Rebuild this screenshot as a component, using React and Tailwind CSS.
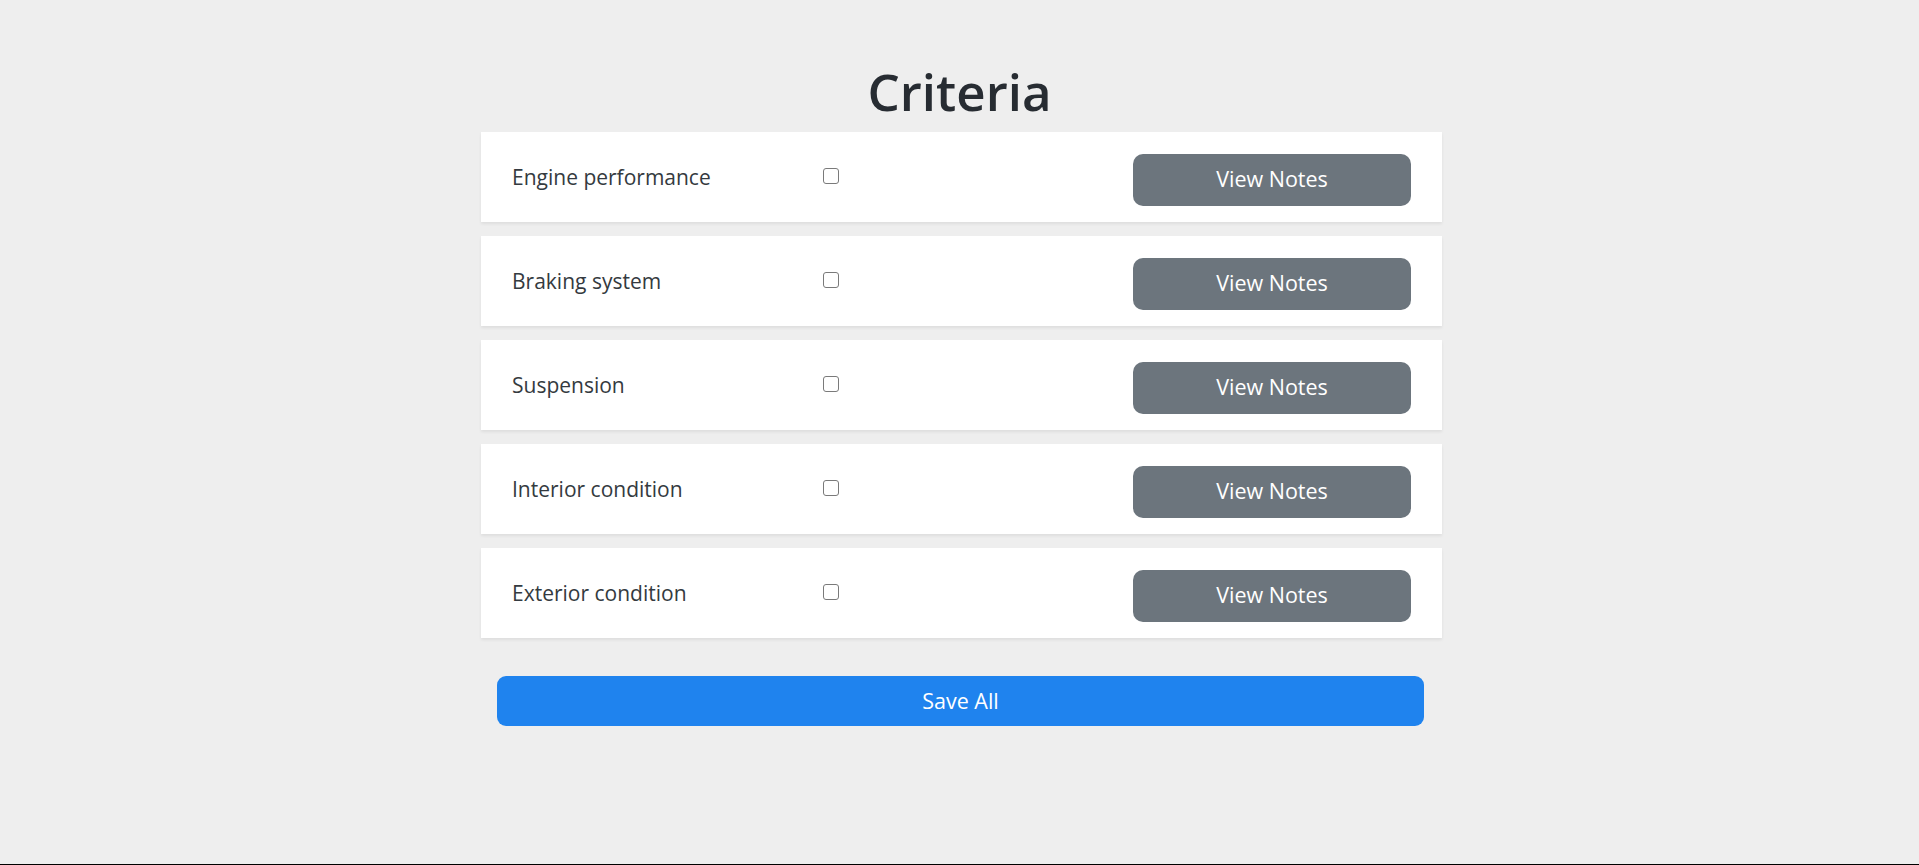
import React, { useState } from 'react';

const criteria = [
  'Engine performance',
  'Braking system',
  'Suspension',
  'Interior condition',
  'Exterior condition',
];

const App = () => {
  const [checked, setChecked] = useState(criteria.map(() => false));

  const toggle = (i) => {
    setChecked(checked.map((c, idx) => (idx === i ? !c : c)));
  };

  return (
    <div className="min-h-screen bg-[#eeeeee] border-b border-black font-['Open_Sans',sans-serif] text-[#212529]">
      <div className="w-[961px] mx-auto pt-[61px]">
        <h1 className="text-[51px] leading-[60px] font-semibold text-center mb-[11px] text-[#272c32]">Criteria</h1>

        <div className="w-[961px] ml-[2px]">
          {criteria.map((name, i) => (
            <div
              key={name}
              className="bg-white h-[90px] mb-[14px] px-[31px] flex items-center shadow-[0_2px_3px_rgba(0,0,0,0.07)]"
            >
              <span className="w-[311px] text-[21px] text-[#343a40] mt-[2px]">{name}</span>
              <input
                type="checkbox"
                checked={checked[i]}
                onChange={() => toggle(i)}
                className="appearance-none w-4 h-4 mb-[2px] border border-[#7a7a7a] rounded-[3px] bg-white checked:bg-[#1f83ee]"
              />
              <div className="flex-1" />
              <button className="w-[278px] h-[52px] mt-[5px] rounded-[10px] bg-[#6c757d] text-white text-[21.5px]">
                View Notes
              </button>
            </div>
          ))}
        </div>

        <div className="pl-[18px] pr-[16px] pt-[24px]">
          <button className="w-full h-[50px] rounded-[9px] bg-[#1f83ee] text-white text-[21.5px]">
            Save All
          </button>
        </div>
      </div>
    </div>
  );
};

export default App;
